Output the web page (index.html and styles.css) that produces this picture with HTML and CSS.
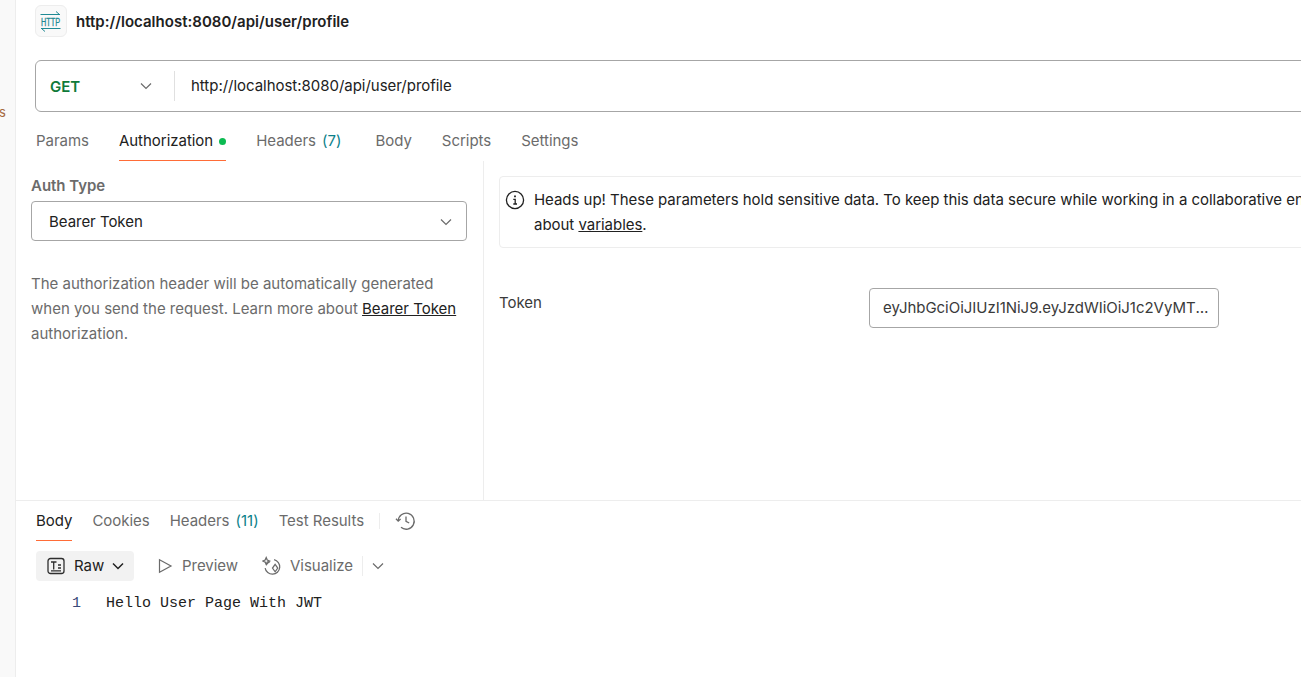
FILE: index.html
```html
<!DOCTYPE html>
<html lang="en">
<head>
  <meta charset="UTF-8">
  <title>Postman request</title>
  <link rel="stylesheet" href="styles.css">
</head>
<body>
  <aside class="rail"><span class="rail-letter">s</span></aside>

  <main class="app">
    <!-- Request title -->
    <div class="title-row">
      <span class="http-badge">
        <svg width="24" height="24" viewBox="0 0 24 24" fill="none" stroke="#1f8a94" stroke-width="1">
          <path d="M1.500 5.500H21M17 2.500L20.500 5.500"/>
          <path d="M2 19.500H21.500M2.500 19.500L6 22.500"/>
          <text class="http-text" x="2" y="16.500" textLength="19" lengthAdjust="spacingAndGlyphs">HTTP</text>
        </svg>
      </span>
      <span class="title-text">http://localhost:8080/api/user/profile</span>
    </div>

    <!-- URL bar -->
    <div class="url-bar">
      <div class="method">
        <span class="method-name">GET</span>
        <svg class="chev" width="12" height="12" viewBox="0 0 12 12"><path d="M1 3.500L6 8.500L11 3.500"/></svg>
      </div>
      <span class="url-text">http://localhost:8080/api/user/profile</span>
    </div>

    <!-- Request tabs -->
    <nav class="tabs req-tabs">
      <span class="tab">Params</span>
      <span class="tab active">Authorization<i class="dot"></i></span>
      <span class="tab tab-count">Headers <em>(7)</em></span>
      <span class="tab">Body</span>
      <span class="tab">Scripts</span>
      <span class="tab">Settings</span>
    </nav>

    <section class="auth">
      <div class="auth-left">
        <label class="auth-label">Auth Type</label>
        <div class="select">
          <span>Bearer Token</span>
          <svg class="chev" width="12" height="12" viewBox="0 0 12 12"><path d="M1 3.500L6 8.500L11 3.500"/></svg>
        </div>
        <p class="auth-help">The authorization header will be automatically generated<br>when you send the request. Learn more about <a href="#">Bearer Token</a><br>authorization.</p>
      </div>
      <div class="auth-right">
        <div class="notice">
          <svg class="notice-icon" width="20" height="20" viewBox="0 0 20 20" fill="none" stroke="#212121" stroke-width="1.300">
            <circle cx="10" cy="10" r="8.600"/>
            <path d="M8.300 9.300H10.200V14M8.300 14H12"/>
            <path d="M10 5.600V7.200" stroke-width="1.800"/>
          </svg>
          <p>Heads up! These parameters hold sensitive data. To keep this data secure while working in a collaborative environment, we<br>about <a href="#">variables</a>.</p>
        </div>
        <div class="token-row">
          <span class="token-label">Token</span>
          <div class="token-input"><span>eyJhbGciOiJIUzI1NiJ9.eyJzdWIiOiJ1c2VyMTIzIiwiaWF0IjoxNzE2</span></div>
        </div>
      </div>
    </section>

    <!-- Response -->
    <section class="response">
      <nav class="tabs res-tabs">
        <span class="tab active">Body</span>
        <span class="tab">Cookies</span>
        <span class="tab">Headers <em>(11)</em></span>
        <span class="tab">Test Results</span>
        <span class="tab-sep"></span>
        <svg class="history" width="22" height="22" viewBox="0 0 22 22" fill="none" stroke="#6b6b6b" stroke-width="1.300">
          <path d="M3.200 11A8 8 0 1 1 6 17.300"/>
          <path d="M1 8.800L3.200 11.200L5.600 9"/>
          <path d="M11 6.500V11.300L14.200 13"/>
        </svg>
      </nav>

      <div class="view-bar">
        <span class="raw-btn">
          <svg width="18" height="18" viewBox="0 0 18 18" fill="none" stroke="#2e2e2e" stroke-width="1.300">
            <rect x="1" y="1.500" width="16" height="15" rx="2.500"/>
            <path d="M4 5H9.500M6.700 5V12.500M11 8H14M11 11H14M4 13.800H14"/>
          </svg>
          <span class="raw-label">Raw</span>
          <svg class="chev dark" width="12" height="12" viewBox="0 0 12 12"><path d="M1 3.500L6 8.500L11 3.500"/></svg>
        </span>
        <span class="view-btn">
          <svg width="16" height="16" viewBox="0 0 16 16" fill="none" stroke="#6b6b6b" stroke-width="1.200"><path d="M2.500 1.800L14 8L2.500 14.200Z"/></svg>
          Preview
        </span>
        <span class="view-btn">
          <svg width="21" height="21" viewBox="0 0 20 20" fill="none" stroke="#6b6b6b" stroke-width="1.200">
            <path d="M11.500 3.500A7 7 0 1 1 3 11.500"/>
            <path d="M4 8.500A7 7 0 0 1 7.500 5.500"/>
            <path d="M12.500 8L15 11.500L12.500 15L10 11.500Z"/>
            <path d="M4 1.500L5 3.800L7.200 4.800L5 5.800L4 8L3 5.800L.8 4.800L3 3.800Z"/>
          </svg>
          Visualize
        </span>
        <span class="view-sep"></span>
        <svg class="chev" width="12" height="12" viewBox="0 0 12 12"><path d="M1 3.500L6 8.500L11 3.500"/></svg>
      </div>

      <div class="code-line">
        <span class="line-no">1</span>
        <span class="line-text">Hello User Page With JWT</span>
      </div>
    </section>
  </main>
</body>
</html>
```

FILE: styles.css
```css
/* General Styles */
* {
  box-sizing: border-box;
}
html, body {
  height: 100%;
}
body {
  margin: 0;
  display: flex;
  height: 677px;
  overflow: hidden;
  background: #fff;
  color: #212121;
  font-family: Inter, "Liberation Sans", sans-serif;
  font-size: 15px;
  letter-spacing: -0.03px;
  line-height: 20px;
}
a {
  color: #212121;
  text-decoration: underline;
}

/* Left rail */
.rail {
  flex: 0 0 16px;
  background: #f9f9f9;
  border-right: 1px solid #ededed;
  padding-top: 102px;
}
.rail-letter {
  display: block;
  color: #a5683f;
  font-size: 13px;
  line-height: 20px;
  margin-left: -1px;
}

.app {
  flex: 1;
  min-width: 0;
  overflow: hidden;
  display: flex;
  flex-direction: column;
}

/* Title */
.title-row {
  height: 60px;
  padding: 5px 0 0 19px;
  display: flex;
  align-items: flex-start;
  gap: 9px;
}
.http-badge {
  width: 32px;
  height: 32px;
  border: 1px solid #ededed;
  border-radius: 6px;
  background: #f9f9f9;
  display: flex;
  align-items: center;
  justify-content: center;
}
.http-text {
  font-family: "Liberation Sans", sans-serif;
  font-size: 10px;
  fill: #1f8a94;
  stroke: #1f8a94;
  stroke-width: 0.3;
  letter-spacing: 0;
}
.title-text {
  font-weight: 600;
  line-height: 34px;
  letter-spacing: 0.02px;
}

/* URL bar */
.url-bar {
  height: 52px;
  margin-left: 19px;
  width: 1300px;
  border: 1px solid #a6a6a6;
  border-radius: 6px;
  display: flex;
  align-items: center;
}
.method {
  width: 139px;
  height: 30px;
  padding: 0 14px;
  border-right: 1px solid #e0e0e0;
  display: flex;
  align-items: center;
  justify-content: space-between;
  padding-right: 22px;
}
.method-name {
  color: #0f7a3a;
  font-weight: 600;
  padding-top: 1px;
}
.url-text {
  padding-left: 16px;
}
.chev {
  fill: none;
  stroke: #6b6b6b;
  stroke-width: 1.200;
}
.chev.dark {
  stroke: #212121;
  stroke-width: 1.500;
}

/* Tabs */
.tabs {
  display: flex;
  align-items: center;
}
.tab {
  color: #6b6b6b;
  height: 100%;
  display: flex;
  align-items: center;
  border-bottom: 1px solid transparent;
  white-space: pre;
}
.tab em {
  font-style: normal;
  color: #0c7f8a;
  margin-left: 2px;
}
.tab.active {
  color: #212121;
  border-bottom-color: #ff6c37;
}
.dot {
  width: 7px;
  height: 7px;
  margin-left: 6px;
  border-radius: 50%;
  background: #0cbb52;
}
.req-tabs {
  height: 37px;
  margin-top: 12px;
  padding-left: 20px;
  gap: 30px;
}
.req-tabs .tab {
  padding-bottom: 2px;
}
.req-tabs .tab-count {
  margin-right: 4px;
}

/* Auth */
.auth {
  flex: 0 0 339px;
  display: flex;
}
.auth-left {
  flex: 0 0 468px;
  border-right: 1px solid #ededed;
  padding: 15px 16px 0 15px;
}
.auth-label {
  display: block;
  color: #6b6b6b;
  font-weight: 600;
  margin-bottom: 5px;
}
.select {
  height: 40px;
  border: 1px solid #a6a6a6;
  border-radius: 4px;
  padding: 1px 14px 0 17px;
  display: flex;
  align-items: center;
  justify-content: space-between;
}
.auth-help {
  margin: 30px 0 0;
  color: #6b6b6b;
  line-height: 25px;
  letter-spacing: 0;
}
.auth-right {
  flex: 1;
  min-width: 0;
  padding: 15px 0 0 15px;
}
.notice {
  width: 1000px;
  height: 72px;
  border: 1px solid #ededed;
  border-radius: 4px;
  padding: 0 0 0 5px;
  display: flex;
  gap: 9px;
}
.notice-icon {
  flex: none;
  margin-top: 13px;
}
.notice p {
  margin: 10px 0 0;
  line-height: 25px;
  white-space: nowrap;
}
.token-row {
  margin-top: 40px;
  display: flex;
  align-items: flex-start;
}
.token-label {
  width: 370px;
  color: #3a3a3a;
  margin-top: 5px;
}
.token-input {
  width: 350px;
  height: 40px;
  border: 1px solid #a6a6a6;
  border-radius: 4px;
  padding: 0 9px 0 13px;
  display: flex;
  align-items: center;
  color: #3a3a3a;
}
.token-input span {
  overflow: hidden;
  text-overflow: ellipsis;
  white-space: nowrap;
}

/* Response */
.response {
  flex: 1;
  border-top: 1px solid #ededed;
}
.res-tabs {
  height: 40px;
  padding-left: 20px;
  gap: 20px;
}
.tab-sep {
  width: 1px;
  height: 16px;
  background: #ededed;
  margin-left: -5px;
  margin-right: -5px;
}
.view-bar {
  margin-top: 10px;
  padding-left: 20px;
  height: 30px;
  display: flex;
  align-items: center;
  color: #6b6b6b;
}
.raw-btn {
  width: 98px;
  height: 30px;
  padding-left: 11px;
  background: #f2f2f2;
  border-radius: 4px;
  color: #212121;
  display: flex;
  align-items: center;
}
.raw-label {
  margin: 0 8px 0 9px;
}
.view-btn {
  display: flex;
  align-items: center;
  gap: 9px;
  margin-left: 23px;
}
.view-btn + .view-btn {
  margin-left: 24px;
  gap: 7px;
}
.view-sep {
  width: 1px;
  height: 20px;
  background: #ededed;
  margin: 0 9px;
}
.code-line {
  display: flex;
  margin-top: 13px;
  font-family: "Liberation Mono", monospace;
  font-size: 15px;
  letter-spacing: 0;
  line-height: 20px;
  color: #212121;
}
.line-no {
  width: 65px;
  text-align: right;
  color: #3b4a7a;
}
.line-text {
  padding-left: 25px;
}
```
